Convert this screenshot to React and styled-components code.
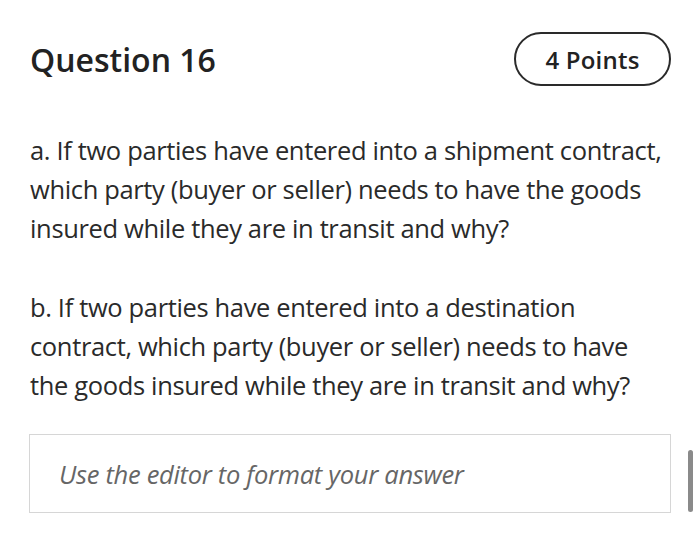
import React from "react";
import styled, { createGlobalStyle } from "styled-components";

const Global = createGlobalStyle`
  html, body { margin: 0; padding: 0; background: #fff; }
  body { font-family: "Open Sans", "Noto Sans", sans-serif; color: #262626; }
`;

const Page = styled.div`
  position: relative;
  width: 700px;
  height: 543px;
  box-sizing: border-box;
  padding: 32px 29px 0 29px;
  overflow: hidden;
`;

const Header = styled.div`
  display: flex;
  align-items: center;
  justify-content: space-between;
  height: 54px;
`;

const Title = styled.h1`
  margin: 0;
  padding-left: 1px;
  font-size: 32px;
  font-weight: 600;
  color: #222;
`;

const Pill = styled.div`
  display: flex;
  align-items: center;
  justify-content: center;
  width: 157px;
  height: 54px;
  box-sizing: border-box;
  border: 2px solid #2a2a2a;
  border-radius: 27px;
  font-size: 24px;
  font-weight: 600;
  letter-spacing: 0.2px;
  color: #222;
`;

const Body = styled.div`
  margin-top: 45px;
  display: flex;
  flex-direction: column;
  gap: 40px;
`;

const Para = styled.p`
  margin: 0;
  padding-left: 1px;
  font-size: 25.5px;
  line-height: 39px;
  letter-spacing: -0.35px;
  color: #2a2a2a;
`;

const AnswerBox = styled.div`
  margin-top: 29px;
  height: 79px;
  box-sizing: border-box;
  border: 1.5px solid #d6d6d6;
  display: flex;
  align-items: center;
  padding-left: 29px;
`;

const Placeholder = styled.span`
  font-size: 25.5px;
  font-style: italic;
  letter-spacing: -0.3px;
  color: #666;
`;

const Scroll = styled.div`
  position: absolute;
  right: 7px;
  top: 450px;
  width: 5px;
  height: 62px;
  border-radius: 3px;
  background: #8a8a8a;
`;

export default function App() {
  return (
    <>
      <Global />
      <Page>
        <Header>
          <Title>Question 16</Title>
          <Pill>4 Points</Pill>
        </Header>
        <Body>
          <Para>
            a. If two parties have entered into a shipment contract, which party
            (buyer or seller) needs to have the goods insured while they are in
            transit and why?
          </Para>
          <Para>
            b. If two parties have entered into a destination contract, which
            party (buyer or seller) needs to have the goods insured while they
            are in transit and why?
          </Para>
        </Body>
        <AnswerBox>
          <Placeholder>Use the editor to format your answer</Placeholder>
        </AnswerBox>
        <Scroll />
      </Page>
    </>
  );
}
